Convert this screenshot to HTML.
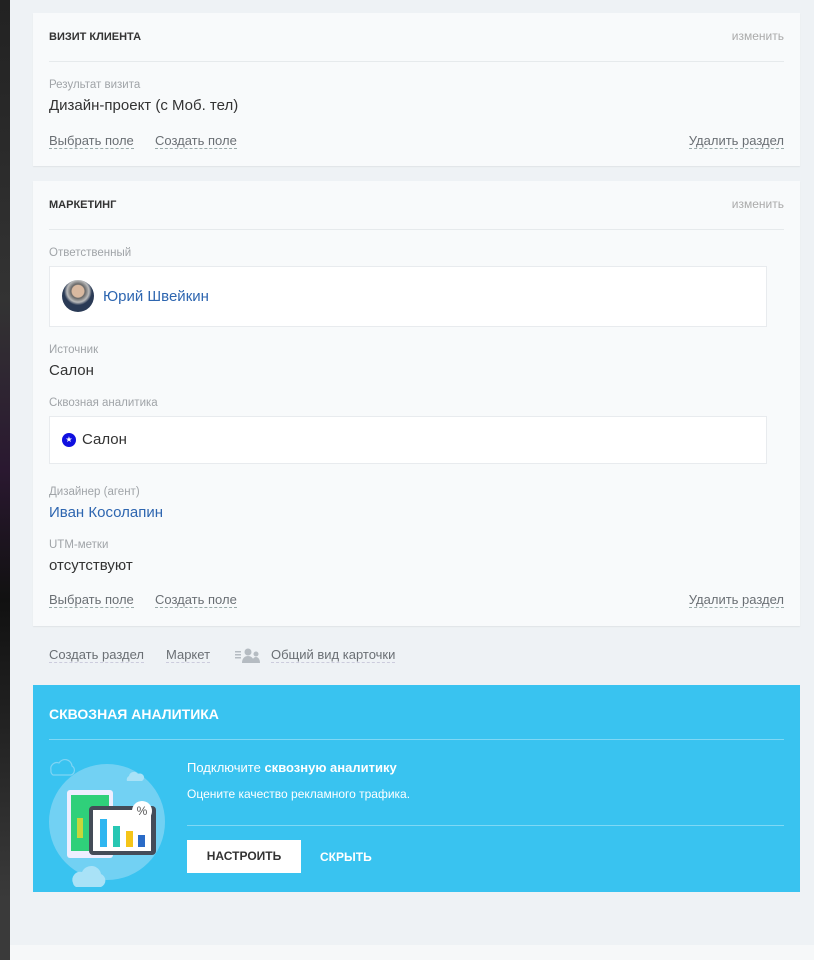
<!DOCTYPE html>
<html><head><meta charset="utf-8"><style>
*{margin:0;padding:0;box-sizing:border-box}
body{width:814px;height:960px;background:#eef2f5;font-family:"Liberation Sans",Arial,sans-serif;position:relative;overflow:hidden;color:#333}
.strip{position:absolute;left:0;top:0;width:10px;height:960px;background:linear-gradient(#222 0,#333 300px,#2a1830 470px,#111 600px,#3a3a3a 900px)}
.bot{position:absolute;left:10px;top:945px;width:804px;height:15px;background:#f6f8f9}
.card{position:absolute;left:33px;width:767px;background:#f8fafb;box-shadow:0 1px 1px rgba(0,0,0,.06)}
.a{position:absolute;white-space:nowrap}
.t{font-size:11px;font-weight:bold;color:#333;left:16px}
.ch{right:16px;font-size:12px;color:#aaa}
.hr{position:absolute;left:16px;right:16px;height:1px;background:#e6eaec}
.l{font-size:11.5px;color:#a0a4a8;left:16px}
.v{font-size:15px;color:#333;left:16px}
.lk{font-size:13px;color:#6a6f74;border-bottom:1px dashed #9aa;line-height:15px}
.box{position:absolute;left:16px;width:718px;background:#fff;border:1px solid #e8ebee}
.blue{color:#2e66b0}
</style></head><body>
<div class="strip"></div><div class="bot"></div>

<div class="card" style="top:13px;height:153px">
 <div class="a t" style="top:18px">ВИЗИТ КЛИЕНТА</div>
 <div class="a ch" style="top:16px">изменить</div>
 <div class="hr" style="top:48px"></div>
 <div class="a l" style="top:66px">Результат визита</div>
 <div class="a v" style="top:84px">Дизайн-проект (с Моб. тел)</div>
 <div class="a lk" style="left:16px;top:120px">Выбрать поле</div>
 <div class="a lk" style="left:122px;top:120px">Создать поле</div>
 <div class="a lk" style="right:16px;top:120px">Удалить раздел</div>
</div>

<div class="card" style="top:181px;height:445px">
 <div class="a t" style="top:18px">МАРКЕТИНГ</div>
 <div class="a ch" style="top:16px">изменить</div>
 <div class="hr" style="top:48px"></div>
 <div class="a l" style="top:66px">Ответственный</div>
 <div class="box" style="top:85px;height:61px">
  <div class="a" style="left:12px;top:13px;width:32px;height:32px;border-radius:50%;background:radial-gradient(circle at 50% 35%,#d9b9a0 0 6px,#666 7px,#bbb 11px,#2a3a55 14px)"></div>
  <div class="a blue" style="left:53px;top:21px;font-size:15px">Юрий Швейкин</div>
 </div>
 <div class="a l" style="top:163px">Источник</div>
 <div class="a v" style="top:181px">Салон</div>
 <div class="a l" style="top:216px">Сквозная аналитика</div>
 <div class="box" style="top:235px;height:48px">
  <div class="a" style="left:12px;top:16px;width:14px;height:14px;border-radius:50%;background:#1010e0;color:#fff;font-size:8px;text-align:center;line-height:14px">★</div>
  <div class="a" style="left:32px;top:14px;font-size:15px">Салон</div>
 </div>
 <div class="a l" style="top:305px">Дизайнер (агент)</div>
 <div class="a v blue" style="top:323px">Иван Косолапин</div>
 <div class="a l" style="top:358px">UTM-метки</div>
 <div class="a v" style="top:376px">отсутствуют</div>
 <div class="a lk" style="left:16px;top:411px">Выбрать поле</div>
 <div class="a lk" style="left:122px;top:411px">Создать поле</div>
 <div class="a lk" style="right:16px;top:411px">Удалить раздел</div>
</div>

<div class="a lk" style="left:49px;top:647px;border-bottom-color:#ccd">Создать раздел</div>
<div class="a lk" style="left:166px;top:647px;border-bottom-color:#ccd">Маркет</div>
<svg class="a" style="left:234px;top:646px" width="30" height="18"><g fill="#b5bcc2"><rect x="1" y="5" width="6" height="1.5"/><rect x="1" y="8" width="6" height="1.5"/><rect x="1" y="11" width="6" height="1.5"/><circle cx="14" cy="6" r="3.5"/><path d="M8 17c0-5 3-7 6-7s6 2 6 7z"/><circle cx="22" cy="8" r="2.5"/><path d="M18 17c0-4 2-6 4-6s4 2 4 6z"/></g></svg>
<div class="a lk" style="left:271px;top:647px;border-bottom-color:#ccd">Общий вид карточки</div>

<div class="a" style="left:33px;top:685px;width:767px;height:207px;background:#39c3f0">
 <div class="a" style="left:16px;top:21px;font-size:14px;font-weight:bold;color:#fff">СКВОЗНАЯ АНАЛИТИКА</div>
 <div class="hr" style="top:54px;background:#7fd8f5"></div>
 <svg class="a" style="left:12px;top:60px" width="130" height="146">
  <path d="M6 25a6 6 0 0 1 8-7a7 7 0 0 1 13 3a5 5 0 0 1-1 9h-18a5 5 0 0 1-2-5z" fill="none" stroke="#7fd4f4" stroke-width="1.2"/>
  <circle cx="62" cy="77" r="58" fill="#7dd3f3" opacity=".85"/>
  <path d="M84 31a5 5 0 0 1 9-2a4 4 0 0 1 4 7h-15a4 4 0 0 1 2-5z" fill="#a9e2f7"/>
  <path d="M28 138a8 8 0 0 1 9-11a10 10 0 0 1 19 2a7 7 0 0 1 0 13h-25a6 6 0 0 1-3-4z" fill="#a9e2f7"/>
  <rect x="22" y="45" width="46" height="68" rx="3" fill="#eef"/>
  <rect x="26" y="50" width="38" height="56" fill="#2fd07a"/>
  <rect x="32" y="73" width="6" height="20" fill="#c7d63a"/>
  <rect x="44" y="61" width="67" height="49" rx="4" fill="#444c58"/>
  <rect x="48" y="65" width="58" height="41" fill="#fff"/>
  <rect x="55" y="74" width="7" height="28" fill="#2fb6f0"/>
  <rect x="68" y="81" width="7" height="21" fill="#28c7b3"/>
  <rect x="81" y="86" width="7" height="16" fill="#f5c518"/>
  <rect x="93" y="90" width="7" height="12" fill="#2a6bc7"/>
  <circle cx="97" cy="66" r="10" fill="#fff"/>
  <text x="97" y="70" font-size="12" text-anchor="middle" fill="#555" font-family="Liberation Sans">%</text>
 </svg>
 <div class="a" style="left:154px;top:75px;font-size:13px;color:#fff">Подключите <b>сквозную аналитику</b></div>
 <div class="a" style="left:154px;top:102px;font-size:12px;color:#fff">Оцените качество рекламного трафика.</div>
 <div class="a" style="left:154px;right:16px;top:140px;height:1px;background:#7fd8f5"></div>
 <div class="a" style="left:154px;top:155px;width:114px;height:33px;background:#fff;font-size:12px;font-weight:bold;color:#333;text-align:center;line-height:33px">НАСТРОИТЬ</div>
 <div class="a" style="left:287px;top:165px;font-size:12px;font-weight:bold;color:#fff">СКРЫТЬ</div>
</div>
</body></html>
